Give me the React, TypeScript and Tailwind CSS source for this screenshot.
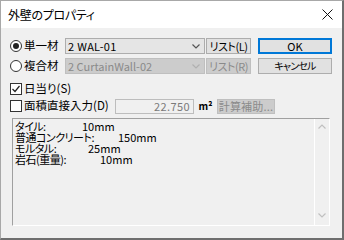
import React from "react";

const font = { fontFamily: '"Noto Sans CJK JP", "Noto Sans", sans-serif', fontFeatureSettings: '"palt"' } as React.CSSProperties;

function Chevron({ color, up = false }: { color: string; up?: boolean }) {
  return (
    <svg width="8" height="5" viewBox="0 0 8 5" className="shrink-0">
      <polyline
        points={up ? "0.5,4.5 4,1 7.5,4.5" : "0.5,0.5 4,4 7.5,0.5"}
        fill="none"
        stroke={color}
        strokeWidth="1.2"
      />
    </svg>
  );
}

function Radio({ checked }: { checked: boolean }) {
  return (
    <div className="w-[12px] h-[12px] rounded-full border border-[#333333] bg-white flex items-center justify-center shrink-0">
      {checked && <div className="w-[6px] h-[6px] rounded-full bg-[#222222]" />}
    </div>
  );
}

function Check({ checked }: { checked: boolean }) {
  return (
    <div className="w-[12px] h-[12px] border border-[#333333] bg-white flex items-center justify-center shrink-0">
      {checked && (
        <svg width="10" height="10" viewBox="0 0 10 10">
          <polyline points="1.5,5 4,7.5 8.5,2" fill="none" stroke="#222" strokeWidth="1.2" />
        </svg>
      )}
    </div>
  );
}

export default function App() {
  return (
    <div
      style={font}
      className="w-[344px] h-[240px] bg-[#f0f0f0] border-l border-t border-[#a8a8a8] border-r-2 border-b-2 border-r-[#6e6e6e] border-b-[#6e6e6e] flex flex-col text-[11px] leading-none text-black whitespace-nowrap"
    >
      {/* Title bar */}
      <div className="h-[27px] bg-white flex items-center justify-between pl-[7px] pr-[9px] shrink-0">
        <span className="text-[12px] tracking-[-0.3px]">外壁のプロパティ</span>
        <svg width="11" height="11" viewBox="0 0 11 11">
          <path d="M0.5 0.5 L10.5 10.5 M10.5 0.5 L0.5 10.5" stroke="#111" strokeWidth="1" />
        </svg>
      </div>

      {/* Body */}
      <div className="flex flex-col pl-[9px] pt-[10px]">
        {/* Row 1 */}
        <div className="flex items-center h-[16px]">
          <div className="w-[55px] flex items-center">
            <Radio checked />
            <span className="ml-[2px] text-[11.5px]">単一材</span>
          </div>
          <div className="w-[140px] h-[16px] bg-[#e5e5e5] border border-[#adadad] flex items-center justify-between pl-[2px] pr-[4px]">
            <span className="tracking-[0.3px]">2 WAL-01</span>
            <Chevron color="#555555" />
          </div>
          <div className="ml-[1px] w-[45px] h-[16px] bg-[#e1e1e1] border border-[#adadad] flex items-center justify-center">
            <span className="tracking-[-0.5px]">リスト(L)</span>
          </div>
          <div className="ml-[7px] w-[74px] h-[16px] bg-[#e1e1e1] border-2 border-[#0078d7] flex items-center justify-center">
            <span>OK</span>
          </div>
        </div>

        {/* Row 2 */}
        <div className="flex items-center h-[16px] mt-[4px]">
          <div className="w-[55px] flex items-center">
            <Radio checked={false} />
            <span className="ml-[2px] text-[11.5px]">複合材</span>
          </div>
          <div className="w-[140px] h-[16px] bg-[#cccccc] border border-[#bfbfbf] flex items-center justify-between pl-[2px] pr-[4px] text-[#8a8a8a]">
            <span>2 CurtainWall-02</span>
            <Chevron color="#b0b0b0" />
          </div>
          <div className="ml-[1px] w-[45px] h-[16px] bg-[#cccccc] border border-[#bfbfbf] flex items-center justify-center text-[#8a8a8a]">
            <span className="tracking-[-0.5px]">リスト(R)</span>
          </div>
          <div className="ml-[7px] w-[74px] h-[16px] bg-[#e1e1e1] border border-[#adadad] flex items-center justify-center">
            <span className="text-[10px] tracking-[-0.8px]">キャンセル</span>
          </div>
        </div>

        {/* Row 3 */}
        <div className="flex items-center h-[14px] mt-[8px]">
          <Check checked />
          <span className="ml-[2px] text-[11.5px]">日当り(S)</span>
        </div>

        {/* Row 4 */}
        <div className="flex items-center h-[14px] mt-[3px]">
          <div className="w-[105px] flex items-center">
            <Check checked={false} />
            <span className="ml-[2px] text-[11.5px]">面積直接入力(D)</span>
          </div>
          <div className="w-[79px] h-[15px] bg-[#f0f0f0] border border-[#bdbdbd] flex items-center justify-end pr-[3px] text-[#7a7a7a]">
            <span className="tracking-[0.4px]">22.750</span>
          </div>
          <div className="w-[23px] flex items-center justify-center">
            <span className="text-[10px] font-semibold">m²</span>
          </div>
          <div className="w-[58px] h-[15px] bg-[#cccccc] border border-[#bfbfbf] flex items-center justify-center text-[#8a8a8a] overflow-hidden">
            <span className="text-[11px] tracking-[0.2px]">計算補助...</span>
          </div>
        </div>

        {/* Text area */}
        <div className="mt-[5px] ml-[2px] w-[318px] h-[108px] border border-[#a0a0a0] border-r-white border-b-white flex">
          <div className="flex-1 flex flex-col pt-[2px] pl-[2px] text-[11px] leading-[11px]">
            <div className="flex"><span className="w-[67px] tracking-[-0.5px]">タイル:</span><span>10mm</span></div>
            <div className="flex"><span className="w-[103px] tracking-[-0.5px]">普通コンクリート:</span><span>150mm</span></div>
            <div className="flex"><span className="w-[73px] tracking-[-0.5px]">モルタル:</span><span>25mm</span></div>
            <div className="flex"><span className="w-[85px] tracking-[-0.5px]">岩石(重量):</span><span>10mm</span></div>
          </div>
          <div className="w-[15px] border-l border-white flex flex-col items-center justify-between pt-[5px] pb-[7px]">
            <Chevron color="#c0c0c0" up />
            <Chevron color="#c0c0c0" />
          </div>
        </div>
      </div>
    </div>
  );
}
